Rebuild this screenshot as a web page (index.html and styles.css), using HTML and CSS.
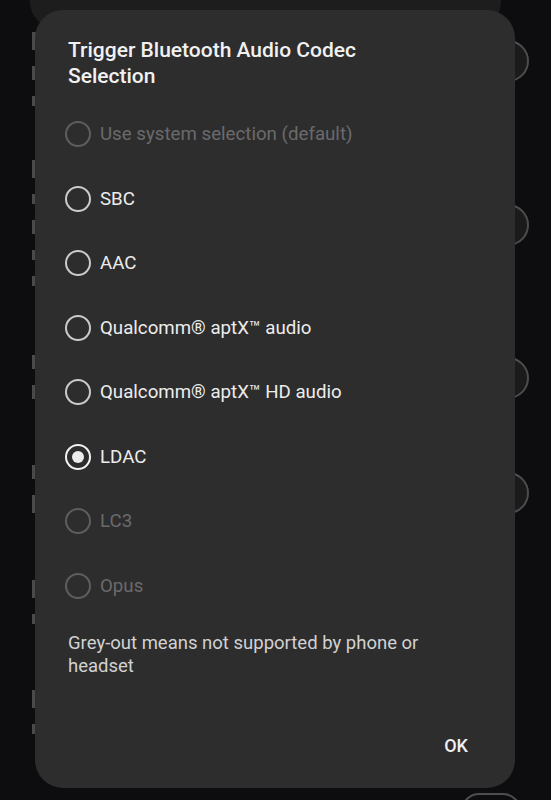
FILE: index.html
```html
<!DOCTYPE html>
<html>
	<head>
		<meta charset="utf-8" />
		<title>Bluetooth Audio Codec</title>
		<link rel="stylesheet" href="styles.css">
	</head>
	<body>
		<div id="screen">
			<!-- settings list behind the dialog, only its edges show -->
			<div class="bgList">
				<div class="topCard"></div>
				<div class="bgRow rowA">
					<div class="bgText"><i class="bar tall"></i><i class="bar"></i><i class="bar short"></i></div>
					<div class="thumb"></div>
				</div>
				<div class="bgRow rowB">
					<div class="bgText"><i class="bar tall"></i><i class="bar short"></i><i class="bar"></i><i class="bar short"></i><i class="bar short"></i></div>
					<div class="thumb"></div>
				</div>
				<div class="bgRow rowC">
					<div class="bgText"><i class="bar"></i><i class="bar"></i></div>
					<div class="thumb"></div>
				</div>
				<div class="bgRow rowD">
					<div class="bgText"><i class="bar"></i><i class="bar tall"></i></div>
					<div class="thumb"></div>
				</div>
				<div class="bgRow rowE">
					<div class="bgText"><i class="bar tall"></i><i class="bar short"></i></div>
				</div>
				<div class="bgRow rowF">
					<div class="bgText"><i class="bar tall"></i><i class="bar short"></i></div>
					<div class="track"></div>
				</div>
			</div>

			<div id="dialog">
				<h1 class="title">Trigger Bluetooth Audio Codec Selection</h1>
				<div class="options">
					<div class="opt off"><span class="radio"></span><span>Use system selection (default)</span></div>
					<div class="opt"><span class="radio"></span><span>SBC</span></div>
					<div class="opt"><span class="radio"></span><span>AAC</span></div>
					<div class="opt"><span class="radio"></span><span>Qualcomm® aptX™ audio</span></div>
					<div class="opt"><span class="radio"></span><span>Qualcomm® aptX™ HD audio</span></div>
					<div class="opt checked"><span class="radio"></span><span>LDAC</span></div>
					<div class="opt off"><span class="radio"></span><span>LC3</span></div>
					<div class="opt off"><span class="radio"></span><span>Opus</span></div>
				</div>
				<p class="note">Grey-out means not supported by phone or headset</p>
				<div class="actions"><span class="okBtn">OK</span></div>
			</div>
		</div>
	</body>
</html>
```

FILE: styles.css
```css
html,body{
	margin: 0;
	padding: 0;
	background: #0d0c0e;
}
#screen{
	position: relative;
	width: 551px;
	height: 800px;
	overflow: hidden;
	font-family: Roboto, "Noto Sans", sans-serif;
}

/* background list */
.topCard{
	height: 28px;
	margin: 0 50px 0 30px;
	background: #1d1d1e;
	border-radius: 0 0 26px 26px;
}
.bgRow{
	display: flex;
	justify-content: space-between;
	align-items: flex-start;
	padding-left: 32px;
}
.bgText{
	display: flex;
	flex-direction: column;
	gap: 16px;
	padding-top: 4px;
}
.bar{
	display: block;
	width: 4px;
	height: 14px;
	background: #4a4a4c;
}
.bar.tall{height: 18px;}
.bar.short{height: 10px;}
.thumb{
	width: 38px;
	height: 38px;
	border: 2px solid #4d4d4f;
	border-radius: 50%;
	background: #1b1b1c;
	margin-right: 22px;
}
.track{
	width: 56px;
	height: 34px;
	border: 2px solid #4d4d4f;
	border-radius: 18px;
	margin: 125px 30px 0 0;
}
.rowA{height: 120px;}
.rowA .thumb{margin-top: 12px;}
.rowB{height: 190px;}
.rowB .bgText{padding-top: 12px;}
.rowB .thumb{margin-top: 56px;}
.rowC{height: 105px;}
.rowC .bgText{padding-top: 17px;}
.rowC .thumb{margin-top: 19px;}
.rowD{height: 115px;}
.rowD .bgText{padding-top: 22px;}
.rowD .thumb{margin-top: 29px;}
.rowE{height: 110px;}
.rowE .bgText{padding-top: 22px;}
.rowF{height: 170px;}
.rowF .bgText{padding-top: 22px;}

/* dialog */
#dialog{
	position: absolute;
	left: 35px;
	top: 10px;
	width: 480px;
	height: 778px;
	box-sizing: border-box;
	padding: 27px 0 31px 0;
	background: #2d2d2e;
	border-radius: 28px;
	display: flex;
	flex-direction: column;
}
.title{
	margin: 0 0 13px 0;
	padding: 0 140px 0 33px;
	font-size: 21px;
	line-height: 26px;
	font-weight: 500;
	color: #f1f1f1;
}
.opt{
	height: 64.5px;
	display: flex;
	align-items: center;
	padding-left: 30px;
	font-size: 18.7px;
	color: #ececec;
}
.radio{
	width: 26px;
	height: 26px;
	box-sizing: border-box;
	border: 2.5px solid #cbcbcb;
	border-radius: 50%;
	margin-right: 9px;
	display: flex;
	align-items: center;
	justify-content: center;
}
.checked .radio{
	border-color: #f2f2f2;
}
.checked .radio:after{
	content: "";
	width: 12px;
	height: 12px;
	border-radius: 50%;
	background: #ececec;
}
.off{
	color: #6a6a6b;
}
.off .radio{
	border-color: #5e5e5f;
}
.note{
	margin: 14px 0 0 0;
	padding: 0 60px 0 33px;
	font-size: 18.5px;
	line-height: 23px;
	color: #d2d2d2;
}
.actions{
	margin-top: auto;
	display: flex;
	justify-content: flex-end;
	padding-right: 47px;
}
.okBtn{
	font-size: 18px;
	line-height: 23px;
	font-weight: 500;
	color: #f0f0f0;
}
```
